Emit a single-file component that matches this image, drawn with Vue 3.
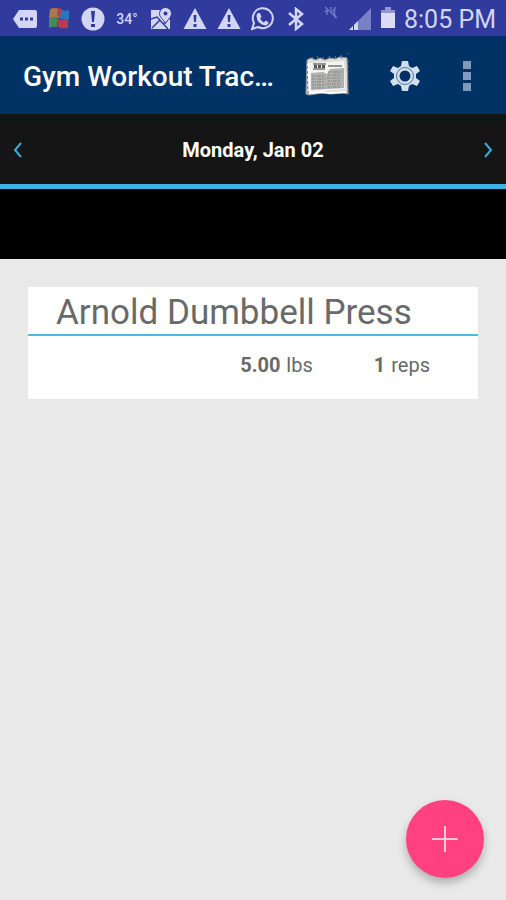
<script setup>
import { ref, computed } from "vue";

const day = ref(new Date(2017, 0, 2));
const workouts = ref([
  { id: 1, name: "Arnold Dumbbell Press", sets: [{ id: 1, weight: 5, reps: 1 }] },
]);

const dayLabel = computed(() => {
  const weekday = day.value.toLocaleDateString("en-US", { weekday: "long" });
  const date = day.value.toLocaleDateString("en-US", { month: "short", day: "2-digit" });
  return weekday + ", " + date;
});

const moveDay = (amount) => {
  const next = new Date(day.value);
  next.setDate(next.getDate() + amount);
  day.value = next;
};

const addSet = () => {
  const sets = workouts.value[0].sets;
  sets.push({ id: sets.length + 1, weight: 5, reps: 1 });
};
</script>

<template>
  <div class="app">
    <div class="status-bar">
      <div class="notifications">
        <svg viewBox="0 0 24 24">
          <path fill="#d3d6f2" fill-rule="evenodd" d="M6 3h16q2 0 2 2v14q0 2-2 2H6L0 12zM7 10.500v3h3v-3zM12 10.500v3h3v-3zM17 10.500v3h3v-3z" />
        </svg>
        <svg viewBox="0 0 24 24">
          <path fill="#a87a4c" d="M3 2q5-2 9 0v9q-5-2-10 1z" />
          <path fill="#2878bd" d="M14 2q4 3 8 1v9q-5 2-10-1z" />
          <path fill="#b83d4b" d="M11 1l4 1-2 8-3-2z" />
          <path fill="#47885a" d="M2 12q5-3 9-1l-1 9q-5-1-8 1z" />
          <path fill="#b83d4b" d="M11 12q5 2 10 0v9q-6 1-10-1z" />
        </svg>
        <svg viewBox="0 0 24 24">
          <circle cx="12" cy="12" r="11.500" fill="#d3d6f2" />
          <path fill="#303b9d" d="M10 4h4l-1 11h-2zM10 17h4v3h-4z" />
        </svg>
        <span class="temperature">34°</span>
        <svg viewBox="0 0 24 24">
          <path fill="#d3d6f2" d="M2 3h9q0 6 5 12l5-3v10H2z" />
          <path d="M2 12l6-2 11 12M3 21l8-8M14 17l4-3" fill="none" stroke="#303b9d" stroke-width="1.500" />
          <path fill="#d3d6f2" stroke="#303b9d" d="M16.500 .5a6 6 0 0 1 6 6c0 4-4 6-6 10-2-4-6-6-6-10a6 6 0 0 1 6-6z" />
          <circle cx="16.500" cy="6.500" r="2" fill="#303b9d" />
        </svg>
        <svg v-for="n in 2" :key="n" viewBox="0 0 24 24">
          <path fill="#d3d6f2" d="M12 1l11.500 21H.5z" />
          <path fill="#303b9d" d="M10.500 8h3l-.5 7h-2zM10.500 17h3v3h-3z" />
        </svg>
        <svg viewBox="0 0 24 24">
          <path d="M1 22l2-6a10 10 0 1 1 4 4z" fill="none" stroke="#d3d6f2" stroke-width="2" />
          <path fill="#d3d6f2" d="M7 6h2l1.500 4L9 11.500q1.500 3 4 4l1.500-2 3 1.700q0 3-3.500 3.300Q6 17 5.500 9 5.500 7 7 6z" />
        </svg>
        <svg viewBox="0 0 24 24">
          <path d="M4 6l13 11-6 5V2l6 5L4 18" fill="none" stroke="#d3d6f2" stroke-width="2.500" />
        </svg>
        <svg viewBox="0 0 24 24">
          <path d="M6 0l12 11M8 2v6M6 5l3-3M12 0v3M15 8l1-8M12 5l4-3M16 7v4" fill="none" stroke="#6f77c2" stroke-width="1.500" />
        </svg>
      </div>
      <div class="system">
        <svg viewBox="0 0 24 24">
          <path fill="#7881c6" d="M23 1v22H1z" />
          <path fill="#d3d6f2" d="M1 23l9-9v9z" />
          <path d="M5.500 16v7" stroke="#303b9d" />
        </svg>
        <svg class="battery" viewBox="0 0 16 24">
          <path fill="#8f96d0" d="M5 0h6v3h4v4H1V3h4z" />
          <path fill="#dcdcf4" d="M1 6h14v15H1z" />
        </svg>
        <time>8:05 PM</time>
      </div>
    </div>

    <header>
      <h1>Gym Workout Trac…</h1>
      <button class="news" aria-label="Workout log">
        <svg viewBox="0 0 48 48">
          <path fill="#dededc" stroke="#999" d="M4 8l4-2 5 2 4-2 5 2 5-2 5 1 5-2 7 1 1 36-5-1-12 1-9-1-13 2-3-1z" />
          <path fill="#f3f3f1" d="M6 11l35-2 1 28-34 3z" />
          <path d="M9 5l2 3M14 4l1 3M20 5l1 3M26 4l1 3M32 4l1 3M38 3l1 4M44 1l1 1" stroke="#6b8193" />
          <path d="M10 12h13M10 17h12M25 14h14" stroke="#777" stroke-width="1.500" />
          <path d="M11 14.500h11" stroke="#555" stroke-width="3" stroke-dasharray="3 1" />
          <path fill="#b0b0ae" d="M8 21l12-1 4 2 3-5 14-1v20l-33 2z" />
          <path d="M9 24h12M25 20h14M9 27h14M25 23h13M9 30h12M24 26h15M9 33h14M25 29h13M9 36h12M24 32h15M25 35h12" stroke="#858583" stroke-dasharray="2 1 1 1 4 1" />
          <path d="M5 10l2 31 12-1 7 1 17-1" fill="none" stroke="#fff" stroke-width="2" />
          <path d="M4 9l1 35M45 8v33" stroke="#777" stroke-dasharray="3 2" />
        </svg>
      </button>
      <button class="settings" aria-label="Settings">
        <svg viewBox="0 0 32 32">
          <path fill="#d2e0ee" fill-rule="evenodd" d="M13 1h6l1 5 3 2 5-2 3 5-4 3v4l4 3-3 5-5-2-3 2-1 5h-6l-1-5-3-2-5 2-3-5 4-3v-4l-4-3 3-5 5 2 3-2zM16 10.500a5.500 5.500 0 1 0 0 11 5.500 5.500 0 1 0 0-11z" />
          <circle cx="16" cy="16" r="8.500" fill="none" stroke="#597594" />
        </svg>
      </button>
      <button class="more" aria-label="More options">
        <svg viewBox="0 0 10 32">
          <path fill="#829bbb" d="M1 1h8v8H1zM1 12h8v8H1zM1 23h8v8H1z" />
        </svg>
      </button>
    </header>

    <nav>
      <button aria-label="Previous day" @click="moveDay(-1)">
        <svg viewBox="0 0 10 16"><path d="M8 1L2 8l6 7" /></svg>
      </button>
      <h2>{{ dayLabel }}</h2>
      <button aria-label="Next day" @click="moveDay(1)">
        <svg viewBox="0 0 10 16"><path d="M2 1l6 7-6 7" /></svg>
      </button>
    </nav>
    <div class="strip"></div>

    <main>
      <section v-for="workout in workouts" :key="workout.id" class="card">
        <h3>{{ workout.name }}</h3>
        <ul>
          <li v-for="set in workout.sets" :key="set.id">
            <span class="weight"><b>{{ set.weight.toFixed(2) }}</b> lbs</span>
            <span class="reps"><b>{{ set.reps }}</b> reps</span>
          </li>
        </ul>
      </section>
    </main>

    <button class="add" aria-label="Add set" @click="addSet">
      <svg viewBox="0 0 26 26"><path d="M13 0v26M0 13h26" /></svg>
    </button>
  </div>
</template>

<style>
body {
  margin: 0;
  background-color: #e9e9e9;
}
</style>

<style scoped>
.app {
  min-height: 100vh;
  font-family: Roboto, sans-serif;
  background-color: #e9e9e9;
}
button {
  border: none;
  padding: 0;
  background-color: transparent;
  cursor: pointer;
}
svg {
  display: block;
  flex-shrink: 0;
}
h1, h2, h3 {
  margin: 0;
}
.status-bar {
  box-sizing: border-box;
  height: 36px;
  padding: 2px 10px 0 13px;
  display: flex;
  justify-content: space-between;
  align-items: center;
  background-color: #303b9d;
  color: #d3d6f2;
}
.notifications {
  display: flex;
  align-items: center;
  gap: 10px;
}
.notifications svg, .system svg {
  width: 24px;
  height: 24px;
}
.temperature {
  width: 24px;
  font-size: 14px;
  font-weight: 500;
  text-align: center;
}
.system {
  display: flex;
  align-items: center;
  gap: 8px;
}
.system .battery {
  width: 16px;
}
time {
  font-size: 25px;
  line-height: 32px;
  padding-top: 2px;
  white-space: nowrap;
}
header {
  box-sizing: border-box;
  height: 78px;
  padding: 2px 34px 0 23px;
  display: flex;
  align-items: center;
  background-color: #003265;
}
h1 {
  flex: 1;
  color: white;
  font-size: 28px;
  font-weight: 500;
  white-space: nowrap;
}
.news svg {
  width: 48px;
  height: 48px;
}
.settings {
  margin: 0 41px 0 38px;
}
.settings svg {
  width: 32px;
  height: 32px;
}
.more svg {
  width: 10px;
  height: 32px;
}
nav {
  box-sizing: border-box;
  height: 75px;
  padding: 2px 12px 0;
  display: flex;
  justify-content: space-between;
  align-items: center;
  background-color: #151515;
  border-bottom: 5px solid #3cb4e6;
}
nav svg {
  width: 12px;
  height: 16px;
  fill: none;
  stroke: #3cabdc;
  stroke-width: 2;
}
h2 {
  color: white;
  font-size: 20px;
  font-weight: 700;
}
.strip {
  height: 70px;
  background-color: black;
}
main {
  padding: 28px;
}
.card {
  background-color: white;
  color: #696969;
}
h3 {
  padding: 5px 28px 0;
  font-size: 35px;
  font-weight: 400;
  line-height: 42px;
  border-bottom: 2px solid #4bb8e2;
}
ul {
  list-style: none;
  margin: 0;
  padding: 0 48px 20px 28px;
}
li {
  display: flex;
  justify-content: flex-end;
  font-size: 20px;
  line-height: 28px;
  padding-top: 15px;
}
.reps {
  margin-left: 61px;
}
b {
  font-weight: 700;
  margin-right: 1px;
}
.add {
  position: fixed;
  right: 22px;
  bottom: 22px;
  width: 78px;
  height: 78px;
  border-radius: 50%;
  display: flex;
  justify-content: center;
  align-items: center;
  background-color: #ff4081;
  box-shadow: 0 5px 8px rgba(0, 0, 0, 0.25);
}
.add svg {
  width: 26px;
  height: 26px;
  stroke: #ffc6da;
  stroke-width: 2;
}
</style>
